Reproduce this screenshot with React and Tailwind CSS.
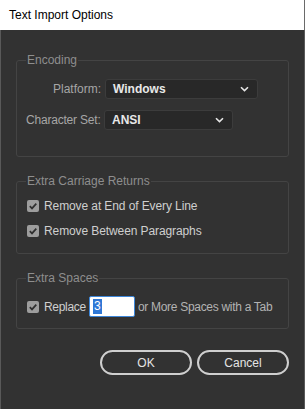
import React from "react"

// Small chevron used inside the dark select boxes
const Chevron = () => (
  <svg width="9" height="6" viewBox="0 0 9 6" className="shrink-0">
    <path d="M1 1.2 L4.5 4.6 L8 1.2" fill="none" stroke="#e6e6e6" strokeWidth="1.6" />
  </svg>
)

const Check = () => (
  <span className="w-[12px] h-[12px] rounded-[2px] bg-[#9d9d9d] flex items-center justify-center shrink-0">
    <svg width="10" height="10" viewBox="0 0 10 10">
      <path d="M1.8 5.2 L4 7.4 L8.3 2.6" fill="none" stroke="#2f2f2f" strokeWidth="1.7" />
    </svg>
  </span>
)

const Select = ({ value, width }) => (
  <div
    className={`h-[20px] ${width} flex items-center justify-between pl-[7px] pr-[8px] rounded-[3px] bg-[#282828] border border-[#3c3c3c] text-[#e8e8e8] font-semibold`}
  >
    <span>{value}</span>
    <Chevron />
  </div>
)

const Group = ({ title, className = "", children }) => (
  <fieldset className={`w-[273px] border border-[#444444] rounded-[3px] px-[10px] ${className}`}>
    <legend className="h-[14px] leading-[14px] px-[1px] -ml-[1px] text-[#8e8e8e] whitespace-nowrap">{title}</legend>
    {children}
  </fieldset>
)

const CheckRow = ({ children }) => (
  <div className="h-[20px] flex items-center gap-[5px] text-[#cfcfcf] whitespace-nowrap">
    <Check />
    <span className="tracking-[-0.1px]">{children}</span>
  </div>
)

export default function App() {
  return (
    <div
      className="w-[305px] h-[409px] flex flex-col text-[12px] leading-[14px]"
      style={{ fontFamily: '"Liberation Sans", Arial, sans-serif' }}
    >
      {/* title bar */}
      <div className="h-[30px] shrink-0 bg-white border-r border-[#6a6a6a] flex items-center pl-[9px] text-black">
        Text Import Options
      </div>

      {/* dialog body */}
      <div className="flex-1 bg-[#323232] border-l border-r border-[#595959] pl-[15px] flex flex-col">
        <Group title="Encoding" className="mt-[23px] pt-[12px] pb-[26px]">
          <div className="flex flex-col gap-[11px]">
            <div className="flex items-center gap-[4px]">
              <span className="w-[74px] text-right text-[#a6a6a6] whitespace-nowrap">Platform:</span>
              <Select value="Windows" width="w-[153px]" />
            </div>
            <div className="flex items-center gap-[4px]">
              <span className="w-[74px] -ml-[1px] text-right text-[#a6a6a6] whitespace-nowrap tracking-[-0.2px]">
                Character Set:
              </span>
              <Select value="ANSI" width="w-[129px]" />
            </div>
          </div>
        </Group>

        <Group title="Extra Carriage Returns" className="mt-[17px] pt-[8px] pb-[12px]">
          <div className="flex flex-col gap-[5px]">
            <CheckRow>Remove at End of Every Line</CheckRow>
            <CheckRow>Remove Between Paragraphs</CheckRow>
          </div>
        </Group>

        <Group title="Extra Spaces" className="mt-[17px] pt-[11px] pb-[11px]">
          <div className="h-[21px] flex items-center gap-[5px] text-[#cfcfcf] whitespace-nowrap">
            <Check />
            <span className="tracking-[-0.3px]">Replace</span>
            <div className="ml-[-2px] w-[46px] h-[21px] shrink-0 bg-white border border-[#3d86d8] rounded-[2px] flex items-center pl-[3px]">
              <span className="bg-[#2f78d6] text-white leading-[15px] px-[1px]">3</span>
            </div>
            <span className="text-[#b3b3b3] ml-[-2px] tracking-[-0.3px]">or More Spaces with a Tab</span>
          </div>
        </Group>

        <div className="mt-[21px] pr-[15px] flex justify-end gap-[5px]">
          <button className="w-[92px] h-[25px] rounded-full border-2 border-[#cfcfcf] text-[#e4e4e4]">OK</button>
          <button className="w-[92px] h-[25px] rounded-full border-2 border-[#cfcfcf] text-[#e4e4e4]">Cancel</button>
        </div>
      </div>
    </div>
  )
}
